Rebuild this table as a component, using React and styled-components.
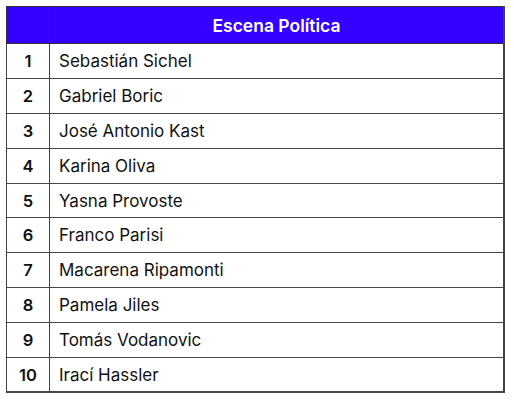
import React from "react";
import styled, { createGlobalStyle } from "styled-components";

const GlobalStyle = createGlobalStyle`
  body {
    margin: 0;
    background: #ffffff;
    font-family: "Inter", "Liberation Sans", sans-serif;
  }
`;

const names = [
  "Sebastián Sichel",
  "Gabriel Boric",
  "José Antonio Kast",
  "Karina Oliva",
  "Yasna Provoste",
  "Franco Parisi",
  "Macarena Ripamonti",
  "Pamela Jiles",
  "Tomás Vodanovic",
  "Irací Hassler",
];

const Wrapper = styled.div`
  padding: 6px 0 0 6px;
`;

const Table = styled.table`
  width: 499px;
  border-collapse: collapse;
  border-right: 2px solid #444;
  border-bottom: 2px solid #444;
  border-left: 1px solid #333;
  border-top: 1px solid #333;
  color: #111;
`;

const HeadCell = styled.th`
  height: 36px;
  padding: 0;
  background: #3500ff;
  color: #ffffff;
  font-size: 17.5px;
  font-weight: 600;
  text-align: center;
  border: 1px solid #333;
`;

const Row = styled.tr`
  height: 34.9px;
`;

const NumCell = styled.td`
  width: 42px;
  padding: 0;
  text-align: center;
  font-size: 16.5px;
  font-weight: 600;
  border: 1px solid #444;
`;

const NameCell = styled.td`
  padding: 0 0 0 9px;
  font-size: 17px;
  font-weight: 400;
  border: 1px solid #444;
`;

export default function App() {
  return (
    <Wrapper>
      <GlobalStyle />
      <Table>
        <thead>
          <tr>
            <HeadCell />
            <HeadCell>Escena Política</HeadCell>
          </tr>
        </thead>
        <tbody>
          {names.map((name, i) => (
            <Row key={name}>
              <NumCell>{i + 1}</NumCell>
              <NameCell>{name}</NameCell>
            </Row>
          ))}
        </tbody>
      </Table>
    </Wrapper>
  );
}
